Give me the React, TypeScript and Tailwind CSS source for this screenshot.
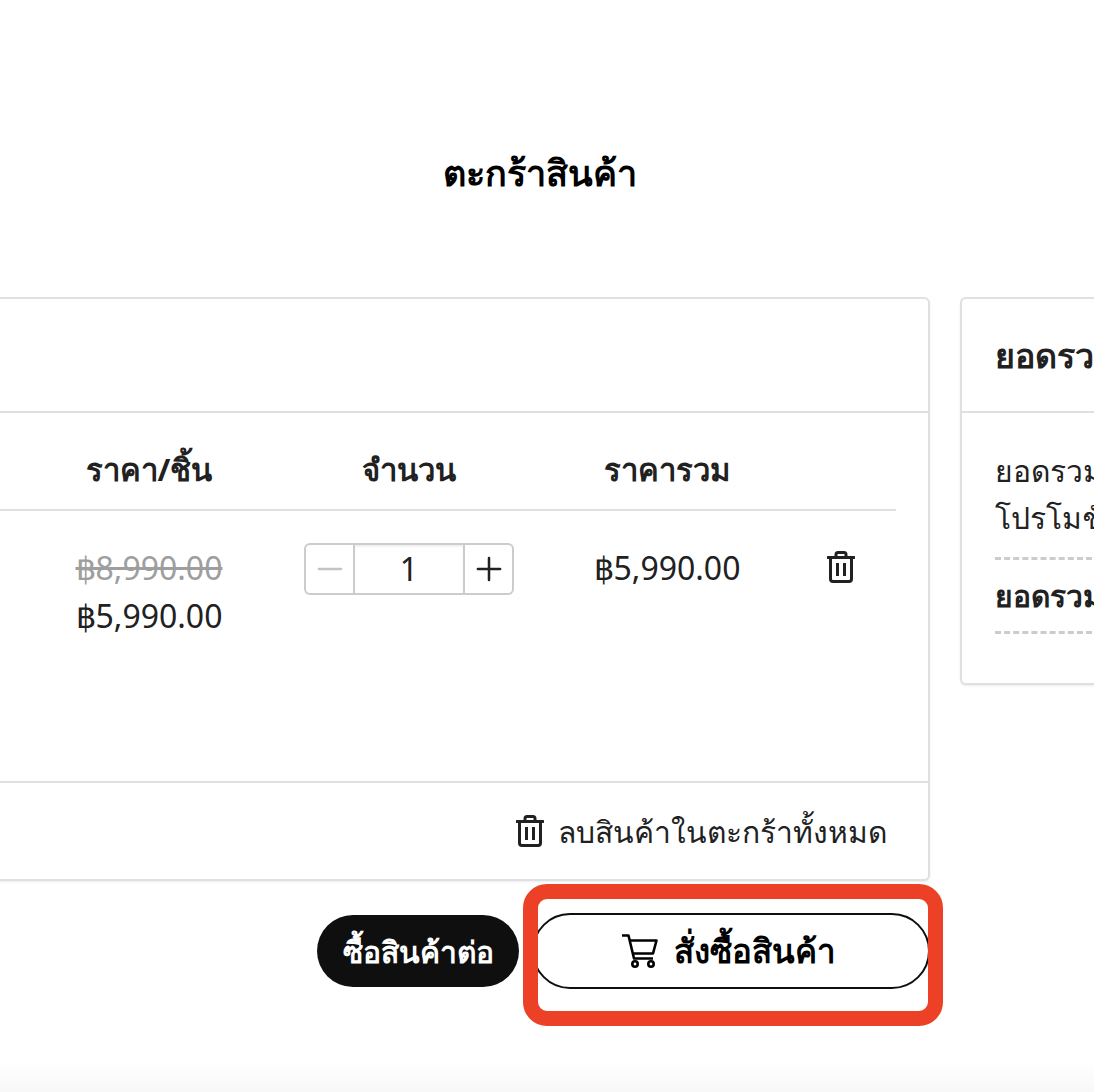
import React from 'react';
import { Minus, Plus } from 'lucide-react';

const TrashIcon = ({ className }: { className?: string }) => (
  <svg viewBox="0 0 28 32" fill="none" stroke="currentColor" strokeWidth="3" className={className}>
    <path d="M1 6.5h26" strokeLinecap="round" />
    <path d="M9 6V3.5C9 2.4 9.9 1.5 11 1.5h6c1.1 0 2 .9 2 2V6" />
    <path d="M3.5 6.5V28c0 1.4 1.1 2.5 2.5 2.5h16c1.4 0 2.5-1.1 2.5-2.5V6.5" strokeLinejoin="round" />
    <path d="M10.5 12v13M17.5 12v13" />
  </svg>
);

const CartIcon = ({ className }: { className?: string }) => (
  <svg viewBox="0 0 36 34" fill="none" stroke="currentColor" strokeWidth="2.6" className={className}>
    <path d="M0 1.5h6.5L12 24.5h19" strokeLinejoin="round" />
    <path d="M7.5 6.5h27l-3.5 13H11" strokeLinejoin="round" />
    <circle cx="13" cy="30" r="2.7" />
    <circle cx="29" cy="30" r="2.7" />
  </svg>
);

export default function App() {
  return (
    <div className="relative h-[1092px] w-[1094px] overflow-hidden bg-white text-[#212121] font-['Noto_Sans','Noto_Sans_CJK_SC',sans-serif]">
      <div className="absolute bottom-0 left-0 right-0 h-[32px] bg-gradient-to-b from-white to-[#f8f8f8]" />

      <h1 className="pt-[148px] pl-[443px] text-[36px] leading-[50px] font-bold text-black">ตะกร้าสินค้า</h1>

      <div className="mt-[99px] -ml-[100px] flex w-[1400px] items-start gap-[30px]">
        <div className="w-[1030px] shrink-0">
          <div className="rounded-[6px] border-2 border-[#e0e0e0] bg-white shadow-[0_1px_2px_rgba(0,0,0,0.08)]">
            <div className="h-[114px] border-b-2 border-[#e0e0e0]" />

            <div className="pr-[32px]">
              <div className="grid h-[98px] grid-cols-[126px_242px_278px_238px_110px] items-center border-b-2 border-[#e0e0e0] pt-[16px] text-center text-[31px] font-bold">
                <div />
                <div>ราคา/ชิ้น</div>
                <div>จำนวน</div>
                <div>ราคารวม</div>
                <div />
              </div>

              <div className="grid h-[270px] grid-cols-[126px_242px_278px_238px_110px] pt-[33px] text-center text-[32px] leading-[48px]">
                <div />
                <div>
                  <div className="text-[#9e9e9e] line-through">฿8,990.00</div>
                  <div>฿5,990.00</div>
                </div>
                <div className="flex justify-center">
                  <div className="-mt-px flex h-[52px] w-[210px] text-[#212121]">
                    <div className="flex w-[51px] items-center justify-center rounded-l-[6px] border-2 border-[#cccccc]">
                      <Minus size={38} strokeWidth={1.6} className="text-[#c4c4c4]" />
                    </div>
                    <div className="flex w-[110px] items-center justify-center border-y-2 border-r-2 border-[#cccccc] text-[32px] shadow-[inset_0_2px_2px_rgba(0,0,0,0.06)]">1</div>
                    <div className="flex w-[49px] items-center justify-center rounded-r-[6px] border-y-2 border-r-2 border-[#cccccc]">
                      <Plus size={38} strokeWidth={1.6} />
                    </div>
                  </div>
                </div>
                <div>฿5,990.00</div>
                <div className="flex justify-center">
                  <TrashIcon className="mt-[7px] h-[32px] w-[28px]" />
                </div>
              </div>
            </div>

            <div className="flex h-[98px] items-center justify-end gap-[14px] border-t-2 border-[#e0e0e0] pr-[41px] text-[30px] font-medium">
              <TrashIcon className="h-[32px] w-[28px]" />
              <span>ลบสินค้าในตะกร้าทั้งหมด</span>
            </div>
          </div>

          <div className="mt-[32px] flex items-center justify-end gap-[13px]">
            <button className="flex h-[72px] w-[202px] items-center justify-center rounded-full bg-[#0f0f0f] text-[30px] font-bold text-white">ซื้อสินค้าต่อ</button>
            <button className="flex h-[76px] w-[398px] items-center justify-center gap-[16px] rounded-full border-2 border-[#0f0f0f] bg-white pr-[4px] text-[33px] font-bold text-black">
              <CartIcon className="h-[34px] w-[36px]" />
              <span>สั่งซื้อสินค้า</span>
            </button>
          </div>
        </div>

        <div className="w-[340px] shrink-0 rounded-[6px] border-2 border-[#e0e0e0] bg-white shadow-[0_1px_2px_rgba(0,0,0,0.08)]">
          <div className="flex h-[114px] items-center border-b-2 border-[#e0e0e0] pl-[33px] text-[34px] font-bold whitespace-nowrap">ยอดรวมตะกร้า</div>
          <div className="px-[33px] pt-[34px] pb-[49px] text-[30px] font-medium whitespace-nowrap">
            <div className="leading-[47px]">ยอดรวมสินค้า</div>
            <div className="leading-[47px]">โปรโมชั่น</div>
            <div className="mt-[16px] flex h-[77px] items-center border-y-[3px] border-dashed border-[#cccccc] font-bold">ยอดรวมทั้งหมด</div>
          </div>
        </div>
      </div>

      {/* highlight over the checkout button */}
      <div className="absolute left-[523px] top-[884px] h-[142px] w-[420px] rounded-[24px] border-[15px] border-[#ec4126]" />
    </div>
  );
}
